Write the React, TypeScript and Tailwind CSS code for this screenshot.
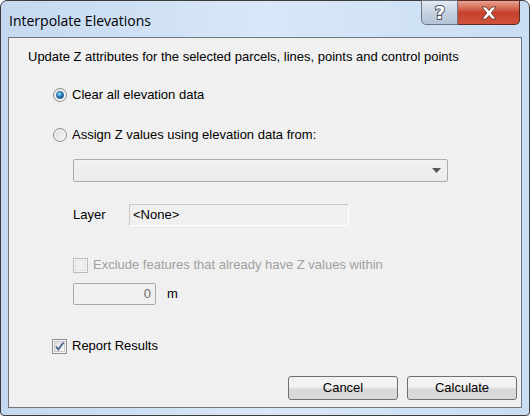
import React from "react";

function Radio({ checked }: { checked?: boolean }) {
  return (
    <svg width="14" height="14" viewBox="0 0 14 14" className="shrink-0">
      <defs>
        <linearGradient id="rbg" x1="0" y1="0" x2="1" y2="1">
          <stop offset="0" stopColor="#d9d9d9" />
          <stop offset="1" stopColor="#fafafa" />
        </linearGradient>
        <radialGradient id="rdot" cx="0.4" cy="0.35" r="0.7">
          <stop offset="0" stopColor="#a7e0ff" />
          <stop offset="0.5" stopColor="#2a8cd0" />
          <stop offset="1" stopColor="#0d3a6a" />
        </radialGradient>
      </defs>
      <circle cx="7" cy="7" r="6.5" fill="url(#rbg)" stroke="#8e8f8f" />
      <circle cx="7" cy="7" r="5" fill="none" stroke="#f4f4f4" />
      {checked && <circle cx="7" cy="7" r="3.6" fill="url(#rdot)" stroke="#1a4f82" strokeWidth="0.6" />}
    </svg>
  );
}

function Check({ checked, disabled }: { checked?: boolean; disabled?: boolean }) {
  return (
    <svg width="15" height="15" viewBox="0 0 15 15" className="shrink-0">
      <defs>
        <linearGradient id="cbg" x1="0" y1="0" x2="1" y2="1">
          <stop offset="0" stopColor="#dcdcdc" />
          <stop offset="1" stopColor="#fbfbfb" />
        </linearGradient>
      </defs>
      <rect x="0.5" y="0.5" width="14" height="14" fill="#f4f4f4" stroke={disabled ? "#bcbcbc" : "#8e8f8f"} />
      <rect x="2.5" y="2.5" width="10" height="10" fill={disabled ? "#f0f0f0" : "url(#cbg)"} stroke={disabled ? "#e2e2e2" : "#c9c9c9"} />
      {checked && <path d="M4 7.5 L6.3 10.5 L11.5 3.5" fill="none" stroke="#4a5f8f" strokeWidth="1.8" />}
    </svg>
  );
}

export default function App() {
  const ui = { fontFamily: '"Liberation Sans", Arial, sans-serif' };
  return (
    <div className="w-[530px] h-[416px] bg-white">
      <div className="w-[530px] h-[416px] flex flex-col rounded-t-[7px] rounded-b-[4px] border border-[#3c3c3c] bg-gradient-to-r from-[#c4d8ef] via-[#d9e8f8] to-[#c9ddf3]">
        <div className="h-[36px] flex items-start pl-[8px] pr-[9px]">
          <div className="mt-[9px] text-[14px] text-black" style={{ fontFamily: '"Open Sans", "Noto Sans", sans-serif' }}>
            Interpolate Elevations
          </div>
          <div className="ml-auto flex h-[25px] -mt-px">
            <div className="w-[37px] h-[25px] rounded-bl-[5px] border border-[#6b7582] bg-gradient-to-b from-[#e3ebf4] via-[#c5d2e0] to-[#b5c4d6] flex items-center justify-center">
              <svg width="16" height="20" viewBox="0 0 16 20">
                <text x="8" y="16" textAnchor="middle" fontSize="18" fontWeight="bold" fill="#ffffff" stroke="#46505c" strokeWidth="1.8" paintOrder="stroke" fontFamily="DejaVu Sans, sans-serif">?</text>
              </svg>
            </div>
            <div className="w-[62px] h-[25px] rounded-br-[5px] border border-l-0 border-[#5b2a24] bg-gradient-to-b from-[#e8a493] via-[#c7402b] to-[#d0513b] flex items-center justify-center">
              <svg width="20" height="14" viewBox="0 0 20 14">
                <path d="M3 1 L7 1 L10 4.5 L13 1 L17 1 L12.2 7 L17 13 L13 13 L10 9.5 L7 13 L3 13 L7.8 7 Z" fill="#fff" stroke="#5d2a22" strokeWidth="0.8" />
              </svg>
            </div>
          </div>
        </div>
        <div className="flex-1 mx-[7px] mb-[7px] border border-[#6e7580] bg-[#f0f0f0] flex flex-col text-[13px] text-black" style={ui}>
          <div className="mt-[11px] ml-[19px] h-[16px] leading-[16px]">
            Update Z attributes for the selected parcels, lines, points and control points
          </div>
          <div className="mt-[22px] ml-[44px] h-[16px] flex items-center gap-[5px]">
            <Radio checked />
            <span>Clear all elevation data</span>
          </div>
          <div className="mt-[24px] ml-[44px] h-[16px] flex items-center gap-[5px]">
            <Radio />
            <span>Assign Z values using elevation data from:</span>
          </div>
          <div className="mt-[16px] ml-[64px] w-[375px] h-[23px] rounded-[2px] border border-[#acacac] bg-gradient-to-b from-[#f2f2f2] to-[#ebebeb] flex items-center justify-end pr-[6px]">
            <svg width="9" height="5" viewBox="0 0 9 5">
              <path d="M0 0 L9 0 L4.5 5 Z" fill="#555" />
            </svg>
          </div>
          <div className="mt-[22px] ml-[64px] flex items-center h-[22px]">
            <span className="w-[56px]">Layer</span>
            <div className="w-[220px] h-[22px] border border-[#c9c9c9] border-b-white border-r-white bg-[#f0f0f0] pl-[3px] flex items-center">
              &lt;None&gt;
            </div>
          </div>
          <div className="mt-[31px] ml-[64px] h-[16px] flex items-center gap-[5px] text-[#a0a0a0]">
            <Check disabled />
            <span>Exclude features that already have Z values within</span>
          </div>
          <div className="mt-[10px] ml-[64px] h-[22px] flex items-center">
            <div className="w-[83px] h-[22px] border border-[#a9a9a9] rounded-[2px] bg-[#f0f0f0] flex items-center justify-end pr-[4px] text-[#6d6d6d]">
              0
            </div>
            <span className="ml-[11px]">m</span>
          </div>
          <div className="mt-[33px] ml-[43px] h-[16px] flex items-center gap-[5px]">
            <Check checked />
            <span>Report Results</span>
          </div>
          <div className="mt-[22px] mr-[4px] flex justify-end gap-[9px]">
            <button className="w-[110px] h-[24px] rounded-[3px] border border-[#707070] bg-gradient-to-b from-[#f2f2f2] from-45% to-[#d9d9d9] to-55% text-[13px]" style={ui}>
              Cancel
            </button>
            <button className="w-[110px] h-[24px] rounded-[3px] border border-[#707070] bg-gradient-to-b from-[#f2f2f2] from-45% to-[#d9d9d9] to-55% text-[13px]" style={ui}>
              Calculate
            </button>
          </div>
        </div>
      </div>
    </div>
  );
}
